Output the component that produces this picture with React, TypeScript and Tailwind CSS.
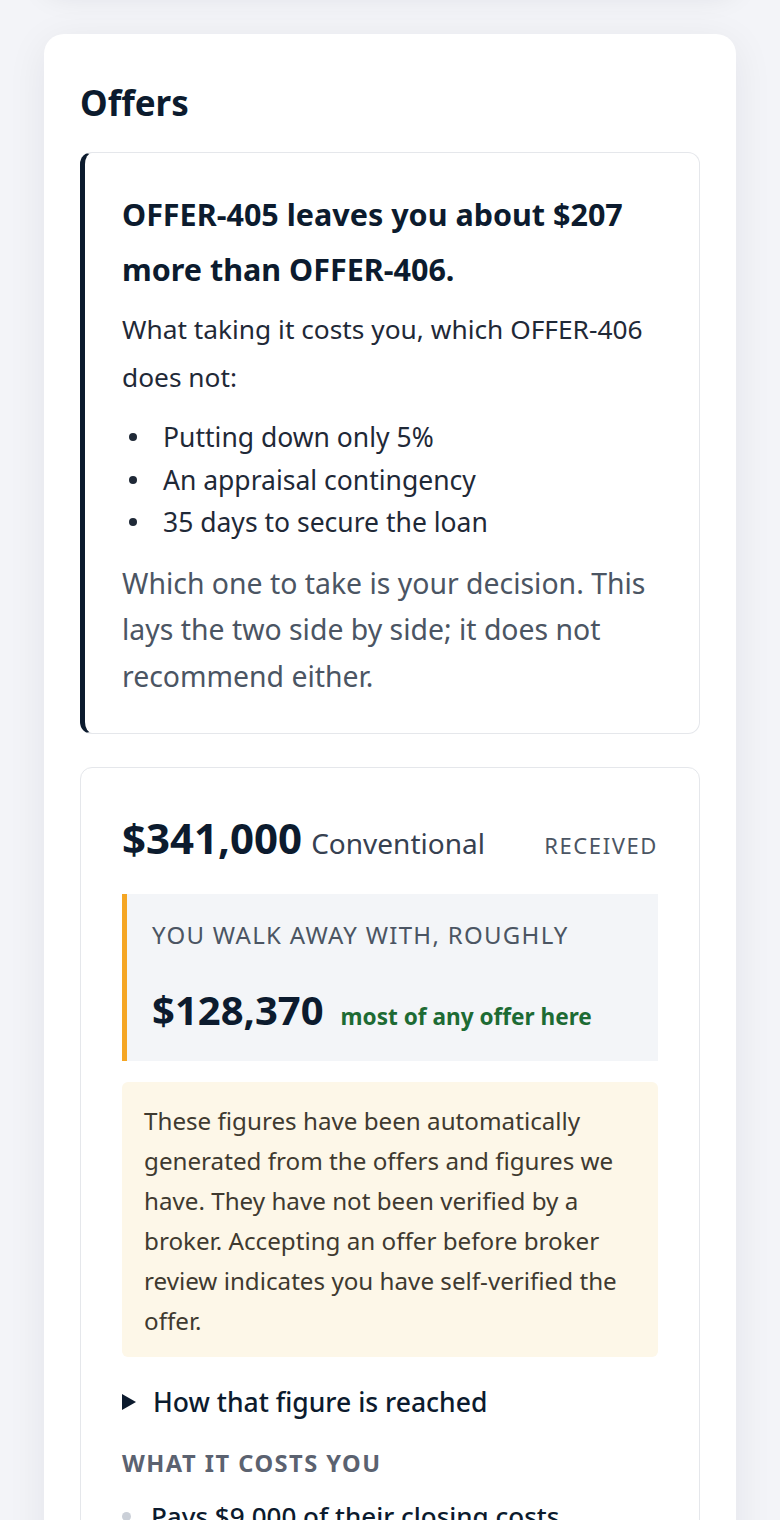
import React from 'react'

const font = { fontFamily: '"Noto Sans", "Open Sans", sans-serif' }

const tradeoffs = ['Putting down only 5%', 'An appraisal contingency', '35 days to secure the loan']

export default function App() {
  return (
    <div
      className="min-h-[1520px] w-full bg-[#f3f4f8] flex flex-col items-center overflow-hidden"
      style={font}
    >
      {/* tail of the section above, only its shadow is visible */}
      <div className="w-[692px] h-[40px] -mt-[56px] rounded-[20px] bg-white shadow-[0_10px_30px_rgba(15,23,42,0.10)]" />

      <div className="mt-[50px] w-[692px] rounded-[20px] bg-white px-[36px] pt-[45px] pb-[40px] shadow-[0_8px_40px_rgba(15,23,42,0.07)]">
        <h2 className="text-[35px] leading-[48px] font-bold text-[#0c1b2e]">Offers</h2>

        <section className="mt-[25px] rounded-[12px] border border-[#e5e7eb] border-l-[5px] border-l-[#0c1b2e] pl-[37px] pr-[30px] pt-[34px] pb-[34px]">
          <h3 className="text-[30.5px] leading-[55px] font-bold text-[#0c1b2e]">
            OFFER-405 leaves you about $207 more than OFFER-406.
          </h3>
          <p className="mt-[8px] text-[26.3px] leading-[48px] text-[#1f2937]">
            What taking it costs you, which OFFER-406 does not:
          </p>
          <ul className="mt-[15px] flex flex-col">
            {tradeoffs.map((t) => (
              <li key={t} className="flex items-center text-[26.5px] leading-[42.5px] text-[#1f2937]">
                <span className="w-[8px] h-[8px] rounded-full bg-[#1f2937] ml-[7px] mr-[26px]" />
                {t}
              </li>
            ))}
          </ul>
          <p className="mt-[16px] text-[28.4px] leading-[46.5px] text-[#4b5563]">
            Which one to take is your decision. This lays the two side by side; it does not recommend either.
          </p>
        </section>

        <section className="mt-[33px] rounded-[12px] border border-[#e5e7eb] px-[41px] pt-[42px] pb-[40px]">
          <div className="flex items-baseline justify-between">
            <div className="flex items-baseline gap-[9px]">
              <span className="text-[42px] leading-[56px] font-bold text-[#0c1b2e]">$341,000</span>
              <span className="text-[28px] text-[#374151]">Conventional</span>
            </div>
            <span className="text-[22px] tracking-[1.6px] text-[#4b5563]">RECEIVED</span>
          </div>

          <div className="mt-[28px] bg-[#f3f5f8] border-l-[5px] border-l-[#f5a623] pl-[25px] pt-[25px] pb-[25px]">
            <div className="text-[24px] leading-[32px] tracking-[1.3px] text-[#4b5563]">
              YOU WALK AWAY WITH, ROUGHLY
            </div>
            <div className="mt-[33px] flex items-baseline gap-[17px]">
              <span className="text-[40px] leading-[52px] font-bold text-[#0c1b2e]">$128,370</span>
              <span className="text-[22.6px] font-bold text-[#1d6b34]">most of any offer here</span>
            </div>
          </div>

          <div className="mt-[21px] rounded-[6px] bg-[#fdf7e8] px-[22px] pt-[19px] pb-[16px] text-[24.2px] leading-[40px] text-[#3f3a30]">
            These figures have been automatically generated from the offers and figures we have. They have not been
            verified by a broker. Accepting an offer before broker review indicates you have self-verified the offer.
          </div>

          <div className="mt-[27px] flex items-center gap-[17px] text-[26.5px] leading-[36px] font-medium text-[#0c1b2e]">
            <svg width="14" height="16" viewBox="0 0 14 16" className="shrink-0">
              <path d="M0 0 L14 8 L0 16 Z" fill="#0c1b2e" />
            </svg>
            How that figure is reached
          </div>

          <div className="mt-[28px] text-[23.6px] leading-[30px] font-bold tracking-[1.5px] text-[#5b6270]">
            WHAT IT COSTS YOU
          </div>

          <ul className="mt-[18px] flex flex-col">
            <li className="flex items-center text-[26px] leading-[40px] font-medium text-[#0c1b2e]">
              <span className="w-[9px] h-[9px] rounded-full bg-[#cbd0d8] mr-[20px]" />
              Pays $9,000 of their closing costs
            </li>
          </ul>
        </section>
      </div>
    </div>
  )
}
